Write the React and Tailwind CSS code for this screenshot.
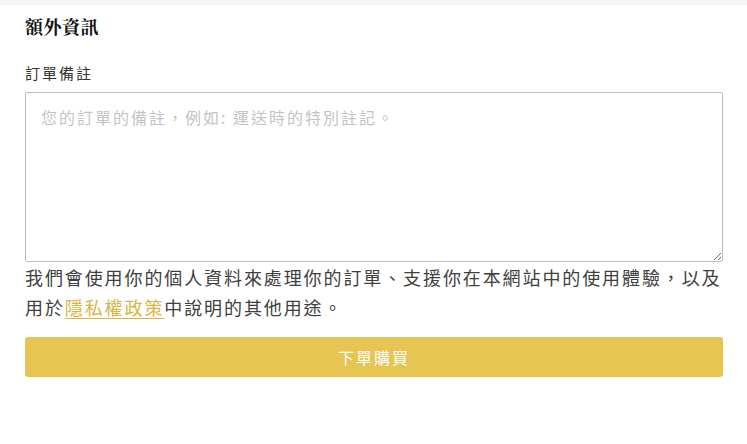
export default function App() {
  return (
    <div className="min-h-[444px] bg-white font-['Noto_Sans_CJK_TC',sans-serif]">
      <div className="h-[5px] bg-[#f6f6f6]" />
      <div className="px-[25px] w-[748px]">
        {/* 額外資訊 */}
        <h3 className="mt-[9px] text-[18px] leading-[24px] font-bold text-[#111] tracking-[0.5px] font-['Noto_Serif_CJK_TC','Noto_Sans_CJK_TC',serif]">
          額外資訊
        </h3>

        <label className="block mt-[25px] text-[15px] leading-[20px] tracking-[2px] text-[#333]">
          訂單備註
        </label>

        <textarea
          className="block mt-[9px] w-full h-[170px] border border-[#bdbdbd] rounded-[2px] px-[15px] py-[12px] text-[16px] tracking-[2px] leading-[24px] text-[#333] placeholder:text-[#c4c4c4] outline-none"
          placeholder="您的訂單的備註，例如: 運送時的特別註記。"
        />

        <p className="text-[18px] leading-[30px] tracking-[1.9px] text-[#404040]">
          我們會使用你的個人資料來處理你的訂單、支援你在本網站中的使用體驗，以及用於
          <a href="#" className="text-[#d9b445] underline underline-offset-[3px]">
            隱私權政策
          </a>
          中說明的其他用途。
        </p>

        <button className="mt-[15px] w-full h-[40px] rounded-[3px] bg-[#e6c552] text-white text-[16px] tracking-[2px]">
          下單購買
        </button>
      </div>
    </div>
  );
}
